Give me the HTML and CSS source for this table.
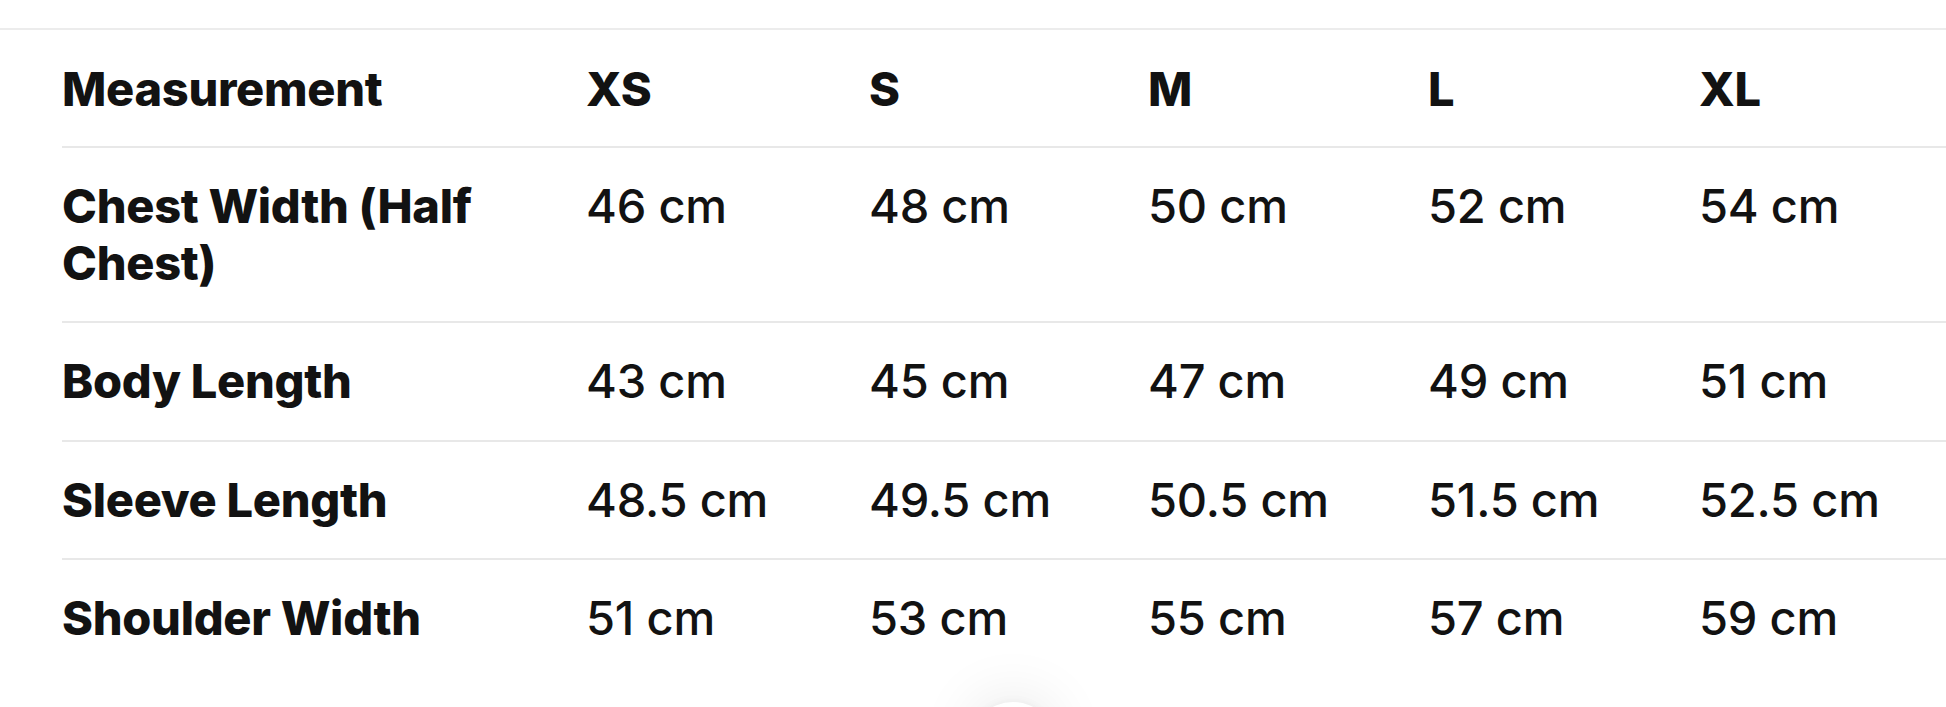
FILE: index.html
```html
<!DOCTYPE html>
<html lang="en">
<head>
<meta charset="utf-8">
<title>Size chart</title>
<link rel="stylesheet" href="styles.css">
</head>
<body>
<div class="page">
  <div class="sheet">
    <table class="sizes">
      <colgroup>
        <col class="c-name">
        <col class="c-xs">
        <col class="c-s">
        <col class="c-m">
        <col class="c-l">
        <col class="c-xl">
      </colgroup>
      <thead>
        <tr>
          <th>Measurement</th>
          <th>XS</th>
          <th>S</th>
          <th>M</th>
          <th>L</th>
          <th>XL</th>
        </tr>
      </thead>
      <tbody>
        <tr>
          <th>Chest Width (Half<br>Chest)</th>
          <td>46 cm</td>
          <td>48 cm</td>
          <td>50 cm</td>
          <td>52 cm</td>
          <td>54 cm</td>
        </tr>
        <tr>
          <th>Body Length</th>
          <td>43 cm</td>
          <td>45 cm</td>
          <td>47 cm</td>
          <td>49 cm</td>
          <td>51 cm</td>
        </tr>
        <tr>
          <th>Sleeve Length</th>
          <td>48.5 cm</td>
          <td>49.5 cm</td>
          <td>50.5 cm</td>
          <td>51.5 cm</td>
          <td>52.5 cm</td>
        </tr>
        <tr>
          <th>Shoulder Width</th>
          <td>51 cm</td>
          <td>53 cm</td>
          <td>55 cm</td>
          <td>57 cm</td>
          <td>59 cm</td>
        </tr>
      </tbody>
    </table>
  </div>
  <button class="fab" aria-label="Scroll"></button>
</div>
</body>
</html>
```

FILE: styles.css
```css
html, body {
  margin: 0;
  padding: 0;
  background: #ffffff;
}

body {
  font-family: Inter, "Noto Sans", "Liberation Sans", sans-serif;
  color: #121212;
  overflow: hidden;
  width: 1946px;
  height: 707px;
}

.page {
  position: relative;
  width: 1946px;
  height: 707px;
  overflow: hidden;
}

.sheet {
  margin-top: 28px;
  border-top: 2px solid #ececec;
  padding-left: 62px;
}

.sizes {
  border-collapse: collapse;
  table-layout: fixed;
  width: 1884px;
  font-size: 47px;
  line-height: 56.5px;
  letter-spacing: -0.2px;
}

.c-name { width: 524px; }
.c-xs { width: 283px; }
.c-s { width: 279px; }
.c-m { width: 280px; }
.c-l { width: 271px; }
.c-xl { width: auto; }

.sizes th,
.sizes td {
  text-align: left;
  vertical-align: top;
  padding: 30px 20px 30px 0;
  border-bottom: 2px solid #e8e8e8;
}

.sizes thead th {
  padding-top: 31px;
  padding-bottom: 28.5px;
}

.sizes th {
  font-weight: 800;
  letter-spacing: -0.3px;
}

.sizes td {
  font-weight: 500;
}

.sizes tbody tr:last-child th,
.sizes tbody tr:last-child td {
  border-bottom: none;
}

.fab {
  position: absolute;
  left: 970px;
  top: 702px;
  width: 86px;
  height: 86px;
  border: none;
  border-radius: 50%;
  background: #ffffff;
  box-shadow: 0 -6px 60px rgba(0, 0, 0, 0.09), 0 0 10px rgba(0, 0, 0, 0.05);
}
```
